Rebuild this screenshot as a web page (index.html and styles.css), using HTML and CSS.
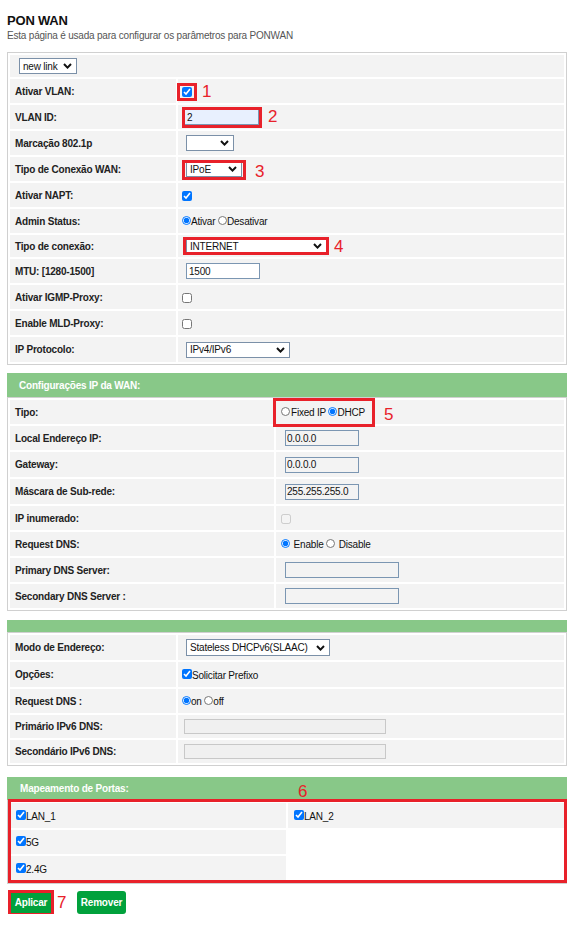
FILE: index.html
```html
<!DOCTYPE html>
<html lang="pt">
<head>
<meta charset="utf-8">
<title>PON WAN</title>
<link rel="stylesheet" href="styles.css">
</head>
<body>
<div class="page">
  <h1 class="title">PON WAN</h1>
  <p class="desc">Esta página é usada para configurar os parâmetros para PONWAN</p>

  <table class="grid t1">
    <colgroup><col class="c166"><col></colgroup>
    <tr class="h22"><td colspan="2" class="first"><span class="sel w58"><select><option>new link</option></select><svg class="chev" viewBox="0 0 9 6"><path d="M1 1L4.5 4.6L8 1"/></svg></span></td></tr>
    <tr class="h24"><td class="lbl">Ativar VLAN:</td><td class="val"><input type="checkbox" class="cb" checked></td></tr>
    <tr class="h24"><td class="lbl">VLAN ID:</td><td class="val"><input type="text" class="txt vlan" value="2"></td></tr>
    <tr class="h24"><td class="lbl">Marcação 802.1p</td><td class="val"><span class="sel w48 ml4"><select><option></option></select><svg class="chev" viewBox="0 0 9 6"><path d="M1 1L4.5 4.6L8 1"/></svg></span></td></tr>
    <tr class="h24"><td class="lbl">Tipo de Conexão WAN:</td><td class="val"><span class="sel w56 ml4"><select><option>IPoE</option></select><svg class="chev" viewBox="0 0 9 6"><path d="M1 1L4.5 4.6L8 1"/></svg></span></td></tr>
    <tr class="h24"><td class="lbl">Ativar NAPT:</td><td class="val"><input type="checkbox" class="cb" checked></td></tr>
    <tr class="h24"><td class="lbl">Admin Status:</td><td class="val"><input type="radio" name="adm" class="rd" checked>Ativar <input type="radio" name="adm" class="rd">Desativar</td></tr>
    <tr class="h22"><td class="lbl">Tipo de conexão:</td><td class="val"><span class="sel w141 ml4"><select><option>INTERNET</option></select><svg class="chev" viewBox="0 0 9 6"><path d="M1 1L4.5 4.6L8 1"/></svg></span></td></tr>
    <tr class="h24"><td class="lbl">MTU: [1280-1500]</td><td class="val"><input type="text" class="txt mtu" value="1500"></td></tr>
    <tr class="h24"><td class="lbl">Ativar IGMP-Proxy:</td><td class="val"><input type="checkbox" class="cb"></td></tr>
    <tr class="h24"><td class="lbl">Enable MLD-Proxy:</td><td class="val"><input type="checkbox" class="cb"></td></tr>
    <tr class="h25"><td class="lbl">IP Protocolo:</td><td class="val"><span class="sel w104 ml4"><select><option>IPv4/IPv6</option></select><svg class="chev" viewBox="0 0 9 6"><path d="M1 1L4.5 4.6L8 1"/></svg></span></td></tr>
  </table>

  <div class="sec-head h2">Configurações IP da WAN:</div>
  <table class="grid t2">
    <colgroup><col class="c264"><col></colgroup>
    <tr class="h24"><td class="lbl">Tipo:</td><td class="val2"><input type="radio" name="tipo" class="rd mr2">Fixed IP <input type="radio" name="tipo" class="rd" checked>DHCP</td></tr>
    <tr class="h24"><td class="lbl">Local Endereço IP:</td><td class="val2"><input type="text" class="txt ro ip" value="0.0.0.0"></td></tr>
    <tr class="h25"><td class="lbl">Gateway:</td><td class="val2"><input type="text" class="txt ro ip" value="0.0.0.0"></td></tr>
    <tr class="h25"><td class="lbl">Máscara de Sub-rede:</td><td class="val2"><input type="text" class="txt ro ip" value="255.255.255.0"></td></tr>
    <tr class="h24"><td class="lbl">IP inumerado:</td><td class="val2"><input type="checkbox" class="cb" disabled></td></tr>
    <tr class="h24"><td class="lbl">Request DNS:</td><td class="val2"><input type="radio" name="rdns" class="rd mr2" checked> Enable <input type="radio" name="rdns" class="rd mr2"> Disable</td></tr>
    <tr class="h24"><td class="lbl">Primary DNS Server:</td><td class="val2"><input type="text" class="txt ro dns" value=""></td></tr>
    <tr class="h24"><td class="lbl">Secondary DNS Server :</td><td class="val2"><input type="text" class="txt ro dns" value=""></td></tr>
  </table>

  <div class="sec-head h3"></div>
  <table class="grid t3">
    <colgroup><col class="c166"><col></colgroup>
    <tr class="h25"><td class="lbl">Modo de Endereço:</td><td class="val"><span class="sel w144 ml4 tall"><select><option>Stateless DHCPv6(SLAAC)</option></select><svg class="chev" viewBox="0 0 9 6"><path d="M1 1L4.5 4.6L8 1"/></svg></span></td></tr>
    <tr class="h25"><td class="lbl">Opções:</td><td class="val"><input type="checkbox" class="cb up" checked>Solicitar Prefixo</td></tr>
    <tr class="h24"><td class="lbl">Request DNS :</td><td class="val"><input type="radio" name="v6dns" class="rd" checked>on <input type="radio" name="v6dns" class="rd">off</td></tr>
    <tr class="h23"><td class="lbl">Primário IPv6 DNS:</td><td class="val"><input type="text" class="txt dis" disabled></td></tr>
    <tr class="h23"><td class="lbl">Secondário IPv6 DNS:</td><td class="val"><input type="text" class="txt dis" disabled></td></tr>
  </table>

  <div class="sec-head h4">Mapeamento de Portas:</div>
  <table class="grid t4">
    <colgroup><col class="c276"><col class="c276"></colgroup>
    <tr class="h25"><td class="port"><input type="checkbox" class="cb up" checked>LAN_1</td><td class="port"><input type="checkbox" class="cb up" checked>LAN_2</td></tr>
    <tr class="h24"><td class="port"><input type="checkbox" class="cb up" checked>5G</td><td class="empty"></td></tr>
    <tr class="h25"><td class="port"><input type="checkbox" class="cb up" checked>2.4G</td><td class="empty"></td></tr>
  </table>

  <div class="actions">
    <button type="button" class="btn apply">Aplicar</button>
    <button type="button" class="btn remove">Remover</button>
  </div>

  <div class="mark box b1"></div><span class="mark num n1">1</span>
  <div class="mark box b2"></div><span class="mark num n2">2</span>
  <div class="mark box b3"></div><span class="mark num n3">3</span>
  <div class="mark box b4"></div><span class="mark num n4">4</span>
  <div class="mark box b5"></div><span class="mark num n5">5</span>
  <div class="mark box b6"></div><span class="mark num n6">6</span>
  <div class="mark box b7"></div><span class="mark num n7">7</span>
</div>
</body>
</html>
```

FILE: styles.css
```css
* { box-sizing: border-box; }

html, body {
  margin: 0;
  background: #ffffff;
}

body {
  font-family: "Liberation Sans", Arial, sans-serif;
  font-size: 10px;
  color: #1a1a1a;
  letter-spacing: -0.2px;
}

.page {
  position: relative;
  padding: 13px 0 0 7px;
}

.title {
  margin: 0;
  font-size: 13px;
  line-height: 16px;
  font-weight: bold;
  color: #111;
}

.desc {
  margin: 1px 0 0;
  font-size: 10px;
  line-height: 12px;
  color: #555;
}

/* tables */
.grid {
  width: 560px;
  table-layout: fixed;
  border: 1px solid #d0d0d0;
  border-collapse: separate;
  border-spacing: 2px;
}

.t1 { margin-top: 10px; }

.c166 { width: 166px; }
.c264 { width: 264px; }
.c276 { width: 276px; }

.grid td {
  background: #f3f3f3;
  padding: 0;
  vertical-align: middle;
  font-size: 10px;
  color: #111;
  white-space: nowrap;
}

.grid td.empty { background: transparent; }

.h22 > td { height: 22px; }
.h23 > td { height: 23px; }
.h24 > td { height: 24px; }
.h25 > td { height: 25px; }

.grid td.lbl {
  padding-left: 5px;
  font-weight: bold;
  color: #222;
}

.grid td.first { padding-left: 9px; }
.grid td.val { padding-left: 4px; }
.grid td.val2 { padding-left: 5px; }
.grid td.port { padding-left: 6px; }

/* section headers */
.sec-head {
  width: 560px;
  background: #88c888;
  color: #fff;
  font-weight: bold;
  font-size: 10px;
  padding-left: 12px;
  display: flex;
  align-items: center;
}

.sec-head.h2 { margin-top: 8px; height: 24px; }
.sec-head.h3 { margin-top: 9px; height: 12px; }
.sec-head.h4 { margin-top: 11px; height: 23px; padding-left: 13px; }

/* select */
.sel {
  position: relative;
  display: inline-block;
  vertical-align: middle;
}

.sel select {
  -webkit-appearance: none;
  appearance: none;
  display: block;
  width: 100%;
  height: 16px;
  margin: 0;
  padding: 0 0 0 3px;
  border: 1px solid #7b90a8;
  border-radius: 0;
  background: #ffffff;
  font-family: "Liberation Sans", Arial, sans-serif;
  font-size: 10px;
  letter-spacing: -0.2px;
  color: #111;
}

.sel.tall select { height: 17px; }

.chev {
  position: absolute;
  right: 5px;
  top: 5px;
  width: 9px;
  height: 6px;
  fill: none;
  stroke: #111;
  stroke-width: 2;
  pointer-events: none;
}

.sel.tall .chev { top: 6px; }

.w48 { width: 48px; }
.w56 { width: 56px; }
.w58 { width: 58px; }
.w104 { width: 104px; }
.w141 { width: 141px; }
.w144 { width: 144px; }
.ml4 { margin-left: 4px; }

/* checkboxes and radios */
.cb {
  width: 10px;
  height: 10px;
  margin: 0;
  vertical-align: middle;
}

.cb.up {
  vertical-align: baseline;
  margin: 0 0 2px 0;
}

.rd {
  width: 9px;
  height: 9px;
  margin: 0;
  vertical-align: baseline;
}

.rd.mr2 { margin-right: 1px; }

/* text inputs */
.txt {
  height: 16px;
  margin: 0;
  padding: 0 0 0 2px;
  border: 1px solid #7b96b2;
  border-radius: 0;
  background: #fff;
  font-family: "Liberation Sans", Arial, sans-serif;
  font-size: 10px;
  letter-spacing: -0.2px;
  color: #111;
  vertical-align: middle;
}

.txt.vlan {
  width: 75px;
  margin-left: 2px;
  background: #e8f0fe;
}

.txt.mtu {
  width: 74px;
  margin-left: 4px;
}

.txt.ro {
  background: #f3f3f3;
  margin-left: 4px;
  padding-left: 1px;
}

.txt.ip { width: 74px; }
.txt.dns { width: 114px; }

.txt.dis {
  width: 202px;
  height: 15px;
  margin-left: 2px;
  border-color: #c8c8c8;
  background: #f0f0f0;
}

/* buttons */
.actions {
  display: flex;
  margin-top: 7px;
}

.btn {
  height: 23px;
  padding: 0;
  border: 0;
  border-radius: 3px;
  background: #01a13c;
  color: #fff;
  font-family: "Liberation Sans", Arial, sans-serif;
  font-size: 10px;
  font-weight: bold;
  letter-spacing: -0.2px;
}

.btn.apply { width: 42px; margin-left: 3px; }
.btn.remove { width: 49px; margin-left: 25px; }

/* annotation overlay */
.mark { position: absolute; }

.box { border: 3px solid #e8212a; }

.b1 { left: 177px; top: 83px; width: 20px; height: 18px; }
.b2 { left: 182px; top: 107px; width: 80px; height: 21px; }
.b3 { left: 182px; top: 160px; width: 64px; height: 20px; }
.b4 { left: 183px; top: 237px; width: 146px; height: 18px; }
.b5 { left: 273px; top: 398px; width: 102px; height: 29px; }
.b6 { left: 8px; top: 799px; width: 559px; height: 84px; }
.b7 { left: 8px; top: 890px; width: 46px; height: 26px; }

.num {
  font-family: "Liberation Sans", Arial, sans-serif;
  font-size: 17px;
  line-height: 17px;
  letter-spacing: 0;
  color: #e8212a;
}

.n1 { left: 202px; top: 83px; }
.n2 { left: 268px; top: 108px; }
.n3 { left: 255px; top: 163px; }
.n4 { left: 334px; top: 238px; }
.n5 { left: 384px; top: 406px; }
.n6 { left: 298px; top: 783px; }
.n7 { left: 57px; top: 894px; }
```
